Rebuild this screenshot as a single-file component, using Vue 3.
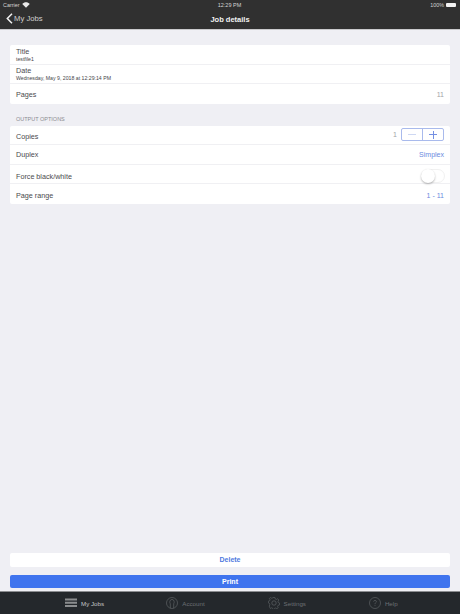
<script setup>
const tabs = [
  { name: 'My Jobs', active: true },
  { name: 'Account' },
  { name: 'Settings' },
  { name: 'Help' }
]
</script>

<template>
  <div class="page">
    <header class="top">
      <div class="status">
        <div class="status-left">
          <span>Carrier</span>
          <svg width="8" height="6" viewBox="0 0 16 12">
            <path d="M8 11.5 0.5 3.8C4.6-.4 11.4-.4 15.5 3.8Z" fill="#e8e8e8" />
          </svg>
        </div>
        <span class="status-time">12:29 PM</span>
        <div class="status-right">
          <span>100%</span>
          <span class="battery"></span>
        </div>
      </div>
      <div class="nav">
        <div class="back">
          <svg width="7" height="11" viewBox="0 0 7 11">
            <path d="M6 .8 1.3 5.5 6 10.2" fill="none" stroke="#f2f2f2" stroke-width="1.5" />
          </svg>
          <span>My Jobs</span>
        </div>
        <span class="nav-title">Job details</span>
      </div>
    </header>

    <main class="content">
      <section class="card first">
        <div class="row two-line">
          <span class="label">Title</span>
          <span class="sub">testfile1</span>
        </div>
        <div class="row two-line">
          <span class="label">Date</span>
          <span class="sub">Wednesday, May 9, 2018 at 12:29:14 PM</span>
        </div>
        <div class="row">
          <span class="label nudge-2">Pages</span>
          <span class="value-gray nudge-2">11</span>
        </div>
      </section>

      <div class="section-label">OUTPUT OPTIONS</div>

      <section class="card">
        <div class="row">
          <span class="label nudge-4">Copies</span>
          <div class="copies">
            <span class="value-gray">1</span>
            <div class="stepper">
              <span class="step minus"><i></i></span>
              <span class="step"><i></i><b></b></span>
            </div>
          </div>
        </div>
        <div class="row">
          <span class="label">Duplex</span>
          <span class="value-blue">Simplex</span>
        </div>
        <div class="row">
          <span class="label nudge-5">Force black/white</span>
          <span class="switch"><span class="knob"></span></span>
        </div>
        <div class="row">
          <span class="label nudge-3">Page range</span>
          <span class="value-blue nudge-3">1 - 11</span>
        </div>
      </section>

      <div class="actions">
        <button class="btn delete">Delete</button>
        <button class="btn print">Print</button>
      </div>
    </main>

    <nav class="tabs">
      <div v-for="tab in tabs" :key="tab.name" class="tab" :class="{ active: tab.active }">
        <svg v-if="tab.name === 'My Jobs'" width="12" height="10" viewBox="0 0 12 10">
          <path d="M0 .5h12v2H0zM0 3.8h12v2H0zM0 7.1h12v2H0z" fill="#8b8d8f" />
        </svg>
        <svg v-else-if="tab.name === 'Account'" width="12" height="12" viewBox="0 0 12 12" fill="none" stroke="#5f6366" stroke-width=".7">
          <circle cx="6" cy="6" r="5.5" />
          <path d="M4.3 11.2V6.8C3.4 5.8 3.6 2.4 6 2.4s2.6 3.4 1.7 4.4v4.4" />
        </svg>
        <svg v-else-if="tab.name === 'Settings'" width="12" height="12" viewBox="0 0 12 12" fill="none" stroke="#5f6366" stroke-width=".7">
          <path d="M5 .5h2l.3 1.5 1.3.6 1.3-.8 1.3 1.5-.9 1.2.3 1.4 1.4.6v2l-1.5.4-.6 1.2.7 1.3-1.5 1.2-1.1-.8-1.3.4-.5 1.3H5l-.4-1.4-1.3-.5-1.2.8L.8 9.7l.8-1.2L1.2 7 0 6.5v-2L1.4 4l.4-1.2-.8-1.2L2.4.6l1.2.8L4.7 1Z" transform="translate(.4 0) scale(.93)" />
          <circle cx="6" cy="6" r="2.2" />
        </svg>
        <svg v-else width="12" height="12" viewBox="0 0 12 12" fill="none" stroke="#5f6366" stroke-width=".7">
          <circle cx="6" cy="6" r="5.5" />
          <path d="M4.6 4.6C4.7 3 7.4 3 7.4 4.6 7.4 5.7 6 5.6 6 7.2M6 8.2v.9" />
        </svg>
        <span>{{ tab.name }}</span>
      </div>
    </nav>
  </div>
</template>

<style>
html, body {
  margin: 0;
  background: #efeff4;
}
</style>

<style scoped>
.page {
  width: 460px;
  height: 614px;
  display: flex;
  flex-direction: column;
  overflow: hidden;
  background: #efeff4;
  font-family: "Liberation Sans", Arial, sans-serif;
  color: #3c3c3e;
}

.top {
  height: 29px;
  flex: none;
  background: #303030;
  border-bottom: 1px solid #c9c9cc;
  color: #f2f2f2;
}
.status {
  height: 10px;
  display: grid;
  grid-template-columns: 1fr auto 1fr;
  align-items: center;
  padding: 0 4px 0 3px;
  font-size: 5.4px;
  color: #d4d4d4;
}
.status-left {
  display: flex;
  align-items: center;
  gap: 3px;
}
.status-time {
  font-size: 5.5px;
}
.status-right {
  display: flex;
  align-items: center;
  justify-content: flex-end;
  gap: 2px;
}
.battery {
  width: 10px;
  height: 4px;
  background: #f2f2f2;
  border-radius: 1px;
}
.nav {
  position: relative;
  height: 19px;
  display: flex;
  align-items: center;
  justify-content: center;
}
.back {
  position: absolute;
  left: 6px;
  top: 3px;
  display: flex;
  align-items: center;
  gap: 1px;
  font-size: 7.7px;
  color: #cfcfcf;
}
.nav-title {
  font-size: 7.5px;
  font-weight: bold;
}

.content {
  flex: 1;
  display: flex;
  flex-direction: column;
  padding: 15px 10px 3px;
}
.card {
  background: #fff;
  border-radius: 2px;
}
.row {
  height: 19.5px;
  box-sizing: border-box;
  padding: 0 6px;
  display: flex;
  align-items: center;
  justify-content: space-between;
  border-bottom: 1px solid #f0f0f3;
}
.row:last-child {
  border-bottom: none;
}
.two-line {
  flex-direction: column;
  align-items: flex-start;
  justify-content: center;
}
.label {
  font-size: 7.2px;
  line-height: 9px;
  color: #4a4a4d;
}
.sub {
  font-size: 5.2px;
  line-height: 6px;
  color: #46464a;
}
.nudge-2 {
  margin-top: 2px;
}
.nudge-3 {
  margin-top: 3px;
}
.nudge-4 {
  margin-top: 4px;
}
.nudge-5 {
  margin-top: 5px;
}
.value-gray {
  font-size: 7px;
  color: #a2a2a6;
}
.value-blue {
  font-size: 7px;
  color: #6b8ae0;
}
.section-label {
  margin: 11.5px 0 2.5px 6px;
  font-size: 5.5px;
  line-height: 8px;
  color: #8c8c91;
}
.copies {
  display: flex;
  align-items: center;
  gap: 4px;
}
.stepper {
  width: 43px;
  height: 13px;
  display: flex;
  box-sizing: border-box;
  border: 1px solid #a9baec;
  border-radius: 2px;
}
.step {
  position: relative;
  flex: 1;
}
.step + .step {
  border-left: 1px solid #a9baec;
}
.step i {
  position: absolute;
  left: 50%;
  top: 50%;
  width: 8px;
  height: 1px;
  margin: -.5px 0 0 -4px;
  background: #7590e2;
}
.step b {
  position: absolute;
  left: 50%;
  top: 50%;
  width: 1px;
  height: 8px;
  margin: -4px 0 0 -.5px;
  background: #7590e2;
}
.minus i {
  background: #ced8f3;
}
.switch {
  position: relative;
  width: 24px;
  height: 14px;
  margin: 5px -1px 0 0;
  box-sizing: border-box;
  border: 1px solid #f1f1f1;
  border-radius: 7px;
  background: #fff;
}
.knob {
  position: absolute;
  left: -1px;
  top: -1px;
  width: 14px;
  height: 14px;
  border-radius: 50%;
  background: #fff;
  box-shadow: 0 1px 2px rgba(0, 0, 0, .3);
}

.actions {
  margin-top: auto;
  display: flex;
  flex-direction: column;
  gap: 8px;
}
.btn {
  display: block;
  width: 100%;
  height: 13.5px;
  padding: 0;
  border: none;
  border-radius: 2px;
  font-family: inherit;
  font-size: 7px;
  font-weight: bold;
}
.delete {
  background: #fff;
  color: #4f7ae0;
}
.print {
  background: #3f74ee;
  color: #fff;
}

.tabs {
  height: 23px;
  flex: none;
  box-sizing: border-box;
  display: flex;
  padding-left: 65px;
  background: #24282c;
  border-top: 1px solid #8b8d90;
}
.tab {
  flex: none;
  width: 101.3px;
  display: flex;
  align-items: center;
  gap: 4px;
  font-size: 6.2px;
  color: #6c7074;
}
.tab.active {
  color: #c4c5c7;
}
</style>
